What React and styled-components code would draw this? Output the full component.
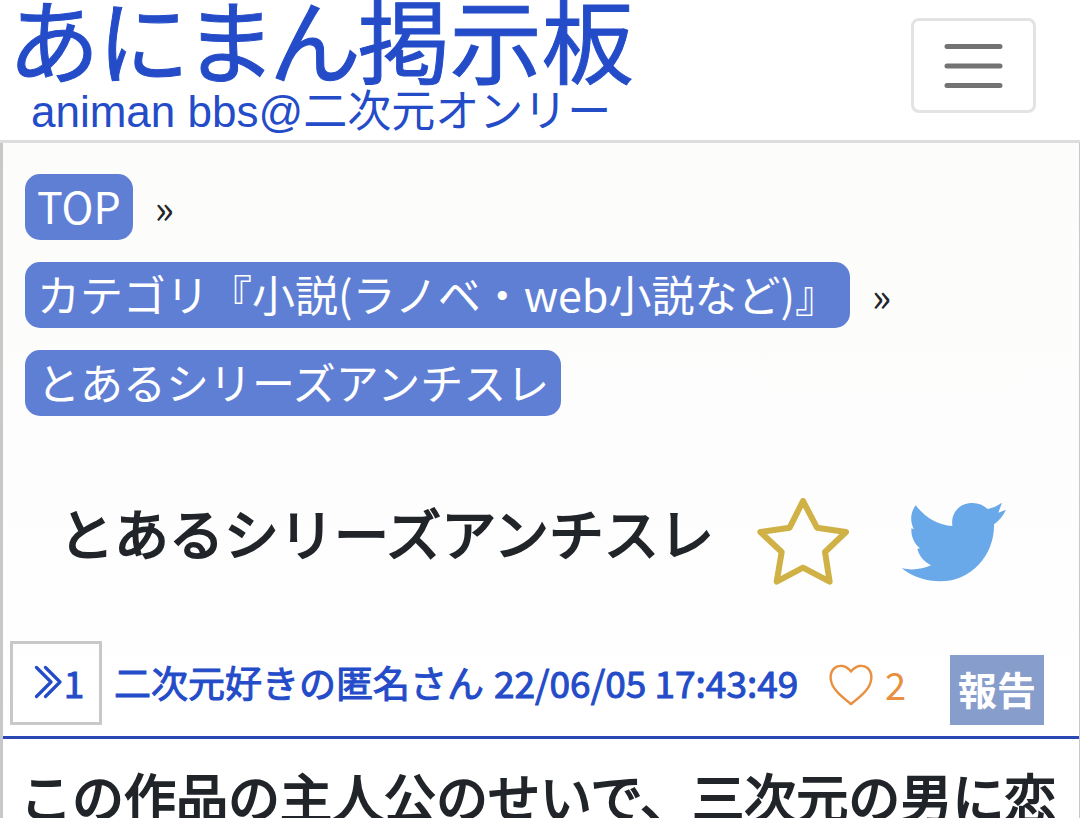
import React from "react";
import styled, { createGlobalStyle } from "styled-components";

const GlobalStyle = createGlobalStyle`
  * {
    box-sizing: border-box;
  }

  body {
    margin: 0;
    background: #fff;
    color: #212529;
    font-family: "Noto Sans CJK JP", sans-serif;
    overflow-x: hidden;
  }
`;

const Header = styled.header`
  display: flex;
  justify-content: space-between;
  align-items: flex-start;
  height: 143px;
  padding: 0 44px 0 9px;
  border-bottom: 3px solid #ddd;
  overflow: hidden;
`;

const Logo = styled.a`
  color: #244cc8;
  text-decoration: none;
  white-space: nowrap;
`;

const LogoName = styled.span`
  display: block;
  font-size: 92px;
  font-feature-settings: "palt";
  line-height: 74px;
  -webkit-text-stroke: 1px #244cc8;
`;

const LogoSub = styled.span`
  display: block;
  padding: 16px 0 0 22px;
  font-family: "Liberation Sans", "Noto Sans CJK JP", sans-serif;
  font-size: 44px;
  line-height: 44px;
`;

const MenuButton = styled.button`
  display: flex;
  align-items: center;
  justify-content: center;
  width: 125px;
  height: 95px;
  margin-top: 18px;
  padding: 0;
  background: none;
  border: 3px solid #e3e3e3;
  border-radius: 8px;
`;

const Main = styled.main`
  background: linear-gradient(#fcfcfa, #fdfdfd 300px, #fff 600px);
  border-left: 3px solid #c8c8c8;
  border-right: 1px solid #c8c8c8;
`;

const Breadcrumb = styled.ol`
  display: flex;
  flex-direction: column;
  gap: 22px;
  margin: 0;
  padding: 31px 22px 0;
  list-style: none;
`;

const Crumb = styled.li`
  display: flex;
  align-items: center;
  gap: 22px;
  font-size: 40px;
  line-height: 62px;
`;

const CrumbLink = styled.a`
  padding: 0 12px 4px;
  background: #5f7fd5;
  border-radius: 15px;
  color: #fff;
  font-size: 43px;
  text-decoration: none;
  white-space: nowrap;
`;

const TitleRow = styled.div`
  display: flex;
  align-items: center;
  height: 225px;
  padding: 26px 72px 0 56px;
`;

const Title = styled.h1`
  flex: 1;
  margin: 0;
  padding-bottom: 22px;
  font-size: 55px;
  font-weight: 400;
  line-height: 80px;
  white-space: nowrap;
  -webkit-text-stroke: 2px;
`;

const IconButton = styled.button`
  display: flex;
  margin: 0 0 0 ${(props) => props.$gap};
  padding: 0;
  background: none;
  border: 0;
`;

const PostHeader = styled.div`
  display: flex;
  align-items: flex-end;
  height: 98px;
  padding: 0 35px 11px 7px;
  border-bottom: 3px solid #2a48b4;
  color: #244cc8;
  font-size: 37px;
  white-space: nowrap;
`;

const PostNumber = styled.a`
  display: flex;
  align-items: center;
  justify-content: center;
  gap: 2px;
  width: 92px;
  height: 84px;
  padding: 0 0 2px 6px;
  border: 3px solid #c8c8c8;
  color: inherit;
  line-height: 76px;
  text-decoration: none;
  -webkit-text-stroke: 1px;
`;

const PostMeta = styled.div`
  display: flex;
  flex: 1;
  gap: 10px;
  padding: 0 0 2px 12px;
  line-height: 82px;
  -webkit-text-stroke: 1px;
`;

const LikeButton = styled.button`
  display: flex;
  align-items: center;
  gap: 12px;
  height: 80px;
  margin-right: 44px;
  padding: 0;
  background: none;
  border: 0;
  color: #e89040;
  font-family: inherit;
  font-size: 38px;
  line-height: 80px;
`;

const LikeCount = styled.span`
  padding-bottom: 2px;
`;

const ReportButton = styled.button`
  width: 94px;
  height: 70px;
  padding: 0 0 4px;
  background: #879dcb;
  border: 0;
  color: #fff;
  font-family: inherit;
  font-size: 39px;
  font-weight: 700;
`;

const PostBody = styled.p`
  height: 79px;
  margin: 0;
  padding: 18px 16px 0 17px;
  font-size: 52px;
  line-height: 78px;
  white-space: nowrap;
  overflow: hidden;
  -webkit-text-stroke: 2px;
`;

const crumbs = [
  "TOP",
  "カテゴリ『小説(ラノベ・web小説など)』",
  "とあるシリーズアンチスレ",
];

const MenuIcon = () => (
  <svg width="60" height="46" viewBox="0 0 60 46" stroke="#737373" strokeWidth="5" strokeLinecap="round">
    <path d="M3 3.5H56M3 23H56M3 42.5H56" />
  </svg>
);

const StarIcon = () => (
  <svg width="92" height="87" viewBox="112 53 276 261" fill="none" stroke="#cfb145" strokeWidth="18" strokeLinejoin="round">
    <path d="M250 62L292 142L379 155L316 215L330 304L250 262L171 304L186 215L122 155L210 142Z" />
  </svg>
);

const TwitterIcon = () => (
  <svg width="106" height="80" viewBox="543 65 318 240" fill="#6aa9e9">
    <path d="M545 264C578 271 608 266 633 255C611 243 597 226 592 205L600 204C583 190 573 170 574 144L582 147C570 125 570 98 587 75C616 112 654 134 697 137C692 96 719 68 758 68C776 68 790 74 803 86C818 83 833 76 846 67L835 97L858 88C850 106 837 121 822 132C824 220 758 302 660 303C620 303 578 290 545 264Z" />
  </svg>
);

const HeartIcon = () => (
  <svg width="44" height="42" viewBox="0 0 44 42" fill="none" stroke="#e89040" strokeWidth="2.4" strokeLinejoin="round">
    <path d="M22 7.5C17 1 10 0.500 5.500 4C-1 10 1.500 20 7 26.500C11 31.500 17 36 22 40C27 36 33 31.500 37 26.500C42.500 20 45 10 38.500 4C34 0.500 27 1 22 7.500Z" />
  </svg>
);

const ArrowsIcon = () => (
  <svg width="28" height="34" viewBox="0 0 28 34" fill="none" stroke="currentColor" strokeWidth="3.2" strokeLinecap="round" strokeLinejoin="round">
    <path d="M2.500 2.500L17 17L2.500 31.500M11.500 2.500L26 17L11.500 31.500" />
  </svg>
);

export default function App() {
  return (
    <>
      <GlobalStyle />
      <Header>
        <Logo href="#">
          <LogoName>あにまん掲示板</LogoName>
          <LogoSub>animan bbs@二次元オンリー</LogoSub>
        </Logo>
        <MenuButton aria-label="メニュー">
          <MenuIcon />
        </MenuButton>
      </Header>
      <Main>
        <Breadcrumb>
          {crumbs.map((crumb, i) => (
            <Crumb key={crumb}>
              <CrumbLink href="#">{crumb}</CrumbLink>
              {i < crumbs.length - 1 && <span>»</span>}
            </Crumb>
          ))}
        </Breadcrumb>
        <TitleRow>
          <Title>とあるシリーズアンチスレ</Title>
          <IconButton $gap="0" aria-label="お気に入り">
            <StarIcon />
          </IconButton>
          <IconButton $gap="52px" aria-label="Twitter">
            <TwitterIcon />
          </IconButton>
        </TitleRow>
        <PostHeader>
          <PostNumber href="#">
            <ArrowsIcon />
            <span>1</span>
          </PostNumber>
          <PostMeta>
            <span>二次元好きの匿名さん</span>
            <time>22/06/05 17:43:49</time>
          </PostMeta>
          <LikeButton aria-label="いいね 2">
            <HeartIcon />
            <LikeCount>2</LikeCount>
          </LikeButton>
          <ReportButton>報告</ReportButton>
        </PostHeader>
        <PostBody>この作品の主人公のせいで、三次元の男に恋</PostBody>
      </Main>
    </>
  );
}
